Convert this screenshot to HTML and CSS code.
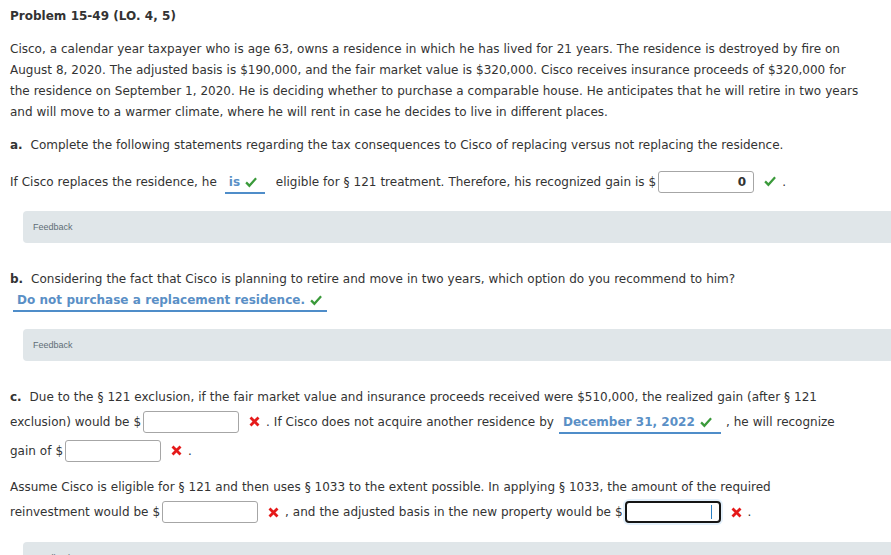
FILE: index.html
```html
<!DOCTYPE html>
<html>
<head>
<meta charset="utf-8">
<link rel="stylesheet" href="styles.css">
</head>
<body>
<div class="page">
  <h1 class="title">Problem 15-49 (LO. 4, 5)</h1>
  <p class="intro">Cisco, a calendar year taxpayer who is age 63, owns a residence in which he has lived for 21 years. The residence is destroyed by fire on<br>August 8, 2020. The adjusted basis is $190,000, and the fair market value is $320,000. Cisco receives insurance proceeds of $320,000 for<br>the residence on September 1, 2020. He is deciding whether to purchase a comparable house. He anticipates that he will retire in two years<br>and will move to a warmer climate, where he will rent in case he decides to live in different places.</p>

  <p class="part part-a"><b>a.</b>&nbsp; Complete the following statements regarding the tax consequences to Cisco of replacing versus not replacing the residence.</p>
  <p class="answer-line line-a">If Cisco replaces the residence, he <span class="select sel-is">is <svg class="ok" viewBox="0 0 12 11" width="12" height="11"><path d="M0.3 6.2 L1.9 4.6 L4.4 7.1 L10.3 0.4 L11.9 1.9 L4.4 10.4 Z"/></svg></span> eligible for § 121 treatment. Therefore, his recognized gain is $<span class="field field-filled">0</span><svg class="ok mark" viewBox="0 0 12 11" width="12" height="11"><path d="M0.3 6.2 L1.9 4.6 L4.4 7.1 L10.3 0.4 L11.9 1.9 L4.4 10.4 Z"/></svg> .</p>
  <div class="feedback">Feedback</div>

  <p class="part part-b"><b>b.</b>&nbsp; Considering the fact that Cisco is planning to retire and move in two years, which option do you recommend to him?</p>
  <p class="select-line"><span class="select sel-long">Do not purchase a replacement residence. <svg class="ok" viewBox="0 0 12 11" width="12" height="11"><path d="M0.3 6.2 L1.9 4.6 L4.4 7.1 L10.3 0.4 L11.9 1.9 L4.4 10.4 Z"/></svg></span></p>
  <div class="feedback">Feedback</div>

  <p class="part part-c"><b>c.</b>&nbsp; Due to the § 121 exclusion, if the fair market value and insurance proceeds received were $510,000, the realized gain (after § 121</p>
  <p class="answer-line line-c1">exclusion) would be $<span class="field"></span><svg class="bad mark" viewBox="0 0 11 11" width="11" height="11"><path d="M1.5 1.5 L9.5 9.5 M9.5 1.5 L1.5 9.5"/></svg> . If Cisco does not acquire another residence by <span class="select sel-date">December 31, 2022 <svg class="ok" viewBox="0 0 12 11" width="12" height="11"><path d="M0.3 6.2 L1.9 4.6 L4.4 7.1 L10.3 0.4 L11.9 1.9 L4.4 10.4 Z"/></svg></span> , he will recognize</p>
  <p class="answer-line line-c2">gain of $<span class="field"></span><svg class="bad mark" viewBox="0 0 11 11" width="11" height="11"><path d="M1.5 1.5 L9.5 9.5 M9.5 1.5 L1.5 9.5"/></svg> .</p>

  <p class="part part-d">Assume Cisco is eligible for § 121 and then uses § 1033 to the extent possible. In applying § 1033, the amount of the required</p>
  <p class="answer-line line-d">reinvestment would be $<span class="field"></span><svg class="bad mark" viewBox="0 0 11 11" width="11" height="11"><path d="M1.5 1.5 L9.5 9.5 M9.5 1.5 L1.5 9.5"/></svg> , and the adjusted basis in the new property would be $<span class="field field-focus"><span class="caret"></span></span><svg class="bad mark" viewBox="0 0 11 11" width="11" height="11"><path d="M1.5 1.5 L9.5 9.5 M9.5 1.5 L1.5 9.5"/></svg> .</p>
  <div class="feedback">Feedback</div>
</div>
</body>
</html>
```
FILE: styles.css
```css
html, body {
  margin: 0;
  padding: 0;
  background: #ffffff;
}
body {
  font-family: "DejaVu Sans", Verdana, sans-serif;
  font-size: 12px;
  word-spacing: 0.15px;
  color: #333333;
  overflow: hidden;
}
.page {
  padding: 6px 0 0 10px;
}
.title {
  font-size: 12px;
  font-weight: bold;
  line-height: 21px;
  margin: 0;
  color: #333;
}
.intro {
  margin: 12px 0 0 0;
  line-height: 21px;
  white-space: nowrap;
}
.part {
  margin: 11px 0 0 0;
  line-height: 21px;
  white-space: nowrap;
}
.part-a {
  margin-top: 12px;
}
.part b {
  color: #333;
}
.answer-line {
  margin: 0;
  white-space: nowrap;
  display: flex;
  align-items: center;
}
.line-a {
  margin-top: 12px;
  height: 27px;
}
.select {
  display: inline-flex;
  align-items: center;
  gap: 5px;
  color: #5a8fc6;
  font-weight: bold;
  border-bottom: 2px solid #4f8dc9;
  line-height: 19px;
  padding: 1px 4px 0 4px;
  box-sizing: border-box;
  white-space: nowrap;
}
.ok {
  display: block;
  fill: #3a9a3a;
}
.bad {
  display: block;
  stroke: #e51a1a;
  stroke-width: 2.8;
  fill: none;
}
.mark {
  margin: 0 6px 0 10px;
}
.ok.mark {
  margin: 0 6px 0 10px;
}
.field {
  display: inline-block;
  width: 96px;
  height: 22px;
  margin-left: 2px;
  box-sizing: border-box;
  border: 1px solid #a6a6a6;
  border-radius: 3px;
  background: #fff;
  font-weight: bold;
  text-align: right;
  padding: 0 7px;
  line-height: 20px;
  position: relative;
}
.field-focus {
  border: 2px solid #151515;
  border-radius: 4px;
  box-shadow: 0 0 0 2px #e3f0fb;
}
.caret {
  position: absolute;
  right: 7px;
  top: 2px;
  width: 1px;
  height: 14px;
  background: #2a7fc4;
}
.feedback {
  margin: 16px 0 0 13px;
  height: 32px;
  background: #e0e6e9;
  border-radius: 4px 0 0 4px;
  font-family: "Liberation Sans", Arial, sans-serif;
  font-size: 9px;
  word-spacing: 0;
  color: #5f6e76;
  line-height: 32px;
  padding-left: 10px;
}
.part-b {
  margin-top: 26px;
}
.sel-is {
  width: 40px;
  margin: 2px 11px 0 8px;
}
.select-line {
  margin: 0 0 0 3px;
  line-height: 21px;
}
.sel-long {
  width: 314px;
  line-height: 20px;
  padding-top: 0;
}
.select-line + .feedback {
  margin-top: 17px;
}
.part-c {
  margin-top: 26px;
}
.line-c1 {
  height: 27px;
}
.sel-date {
  width: 162px;
  margin: 2px 5px 0 5px;
}
.line-c2 {
  height: 31px;
}
.part-d {
  margin-top: 11px;
}
.line-d {
  height: 28px;
}
.line-d + .feedback {
  margin-top: 16px;
}
```
